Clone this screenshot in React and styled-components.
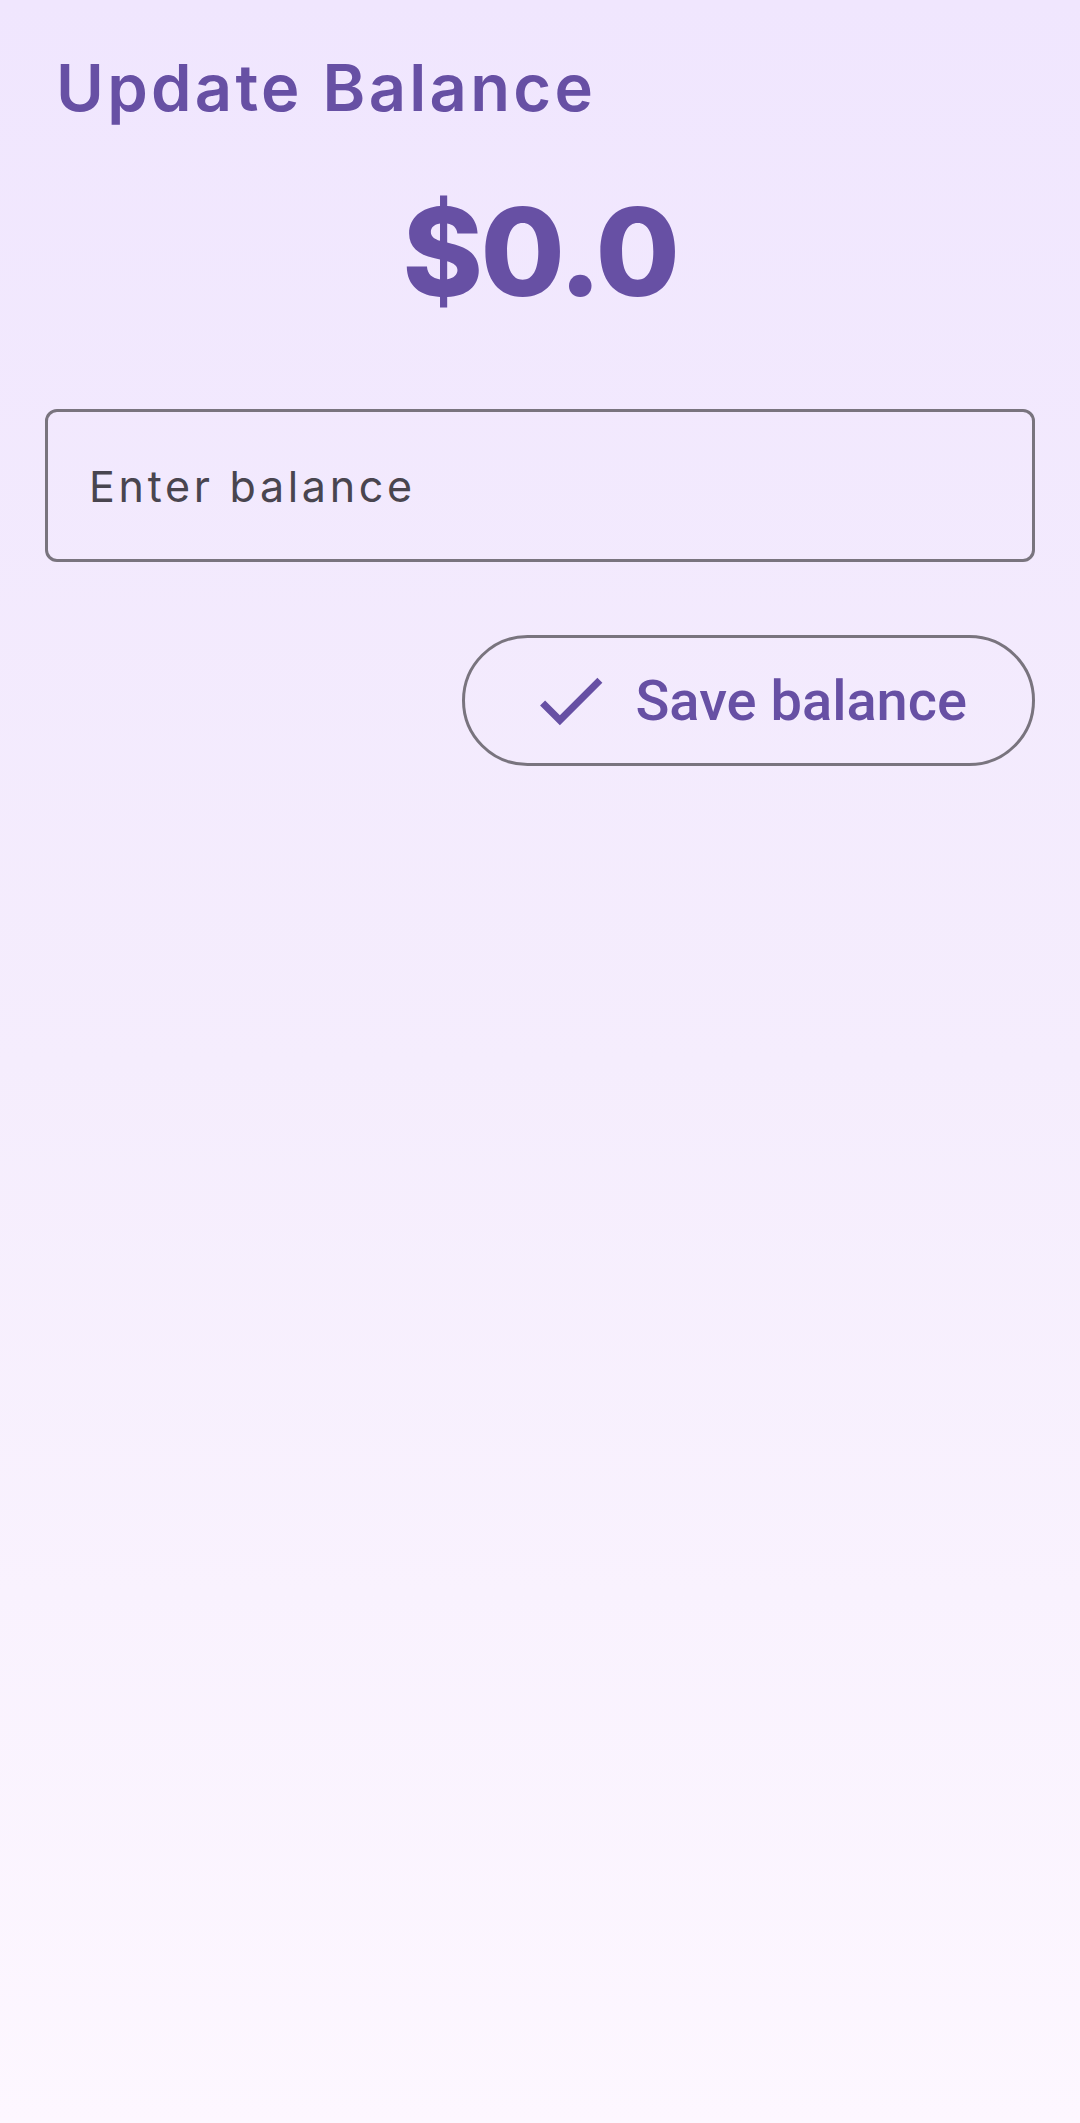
import React from "react";
import styled, { createGlobalStyle } from "styled-components";

const Global = createGlobalStyle`
  html, body {
    margin: 0;
    padding: 0;
  }
  body {
    min-height: 2123px;
    background: linear-gradient(180deg, #f0e6fe 0%, #f5edfd 50%, #fdf7ff 100%);
    font-family: Inter, "Open Sans", sans-serif;
  }
`;

const Page = styled.main`
  min-height: 2123px;
  box-sizing: border-box;
  padding: 55px 45px 0 45px;
  display: flex;
  flex-direction: column;
`;

const Title = styled.h1`
  margin: 0 0 0 11px;
  font-family: Inter, "Open Sans", sans-serif;
  font-weight: 600;
  font-size: 65px;
  line-height: 65px;
  letter-spacing: 3.3px;
  color: #6750a4;
`;

const Amount = styled.div`
  margin-top: 71px;
  align-self: center;
  font-family: Inter, "Open Sans", sans-serif;
  font-weight: 800;
  font-size: 122px;
  line-height: 122px;
  letter-spacing: -2.5px;
  color: #6750a4;
`;

const Field = styled.label`
  margin-top: 96px;
  height: 153px;
  box-sizing: border-box;
  border: 3px solid #79747e;
  border-radius: 12px;
  display: flex;
  align-items: center;
  padding: 0 0 0 41px;
`;

const Input = styled.input`
  flex: 1;
  border: none;
  outline: none;
  background: transparent;
  font-family: Inter, "Open Sans", sans-serif;
  font-size: 43px;
  letter-spacing: 3.7px;
  color: #1d1b20;
  padding: 0;
  &::placeholder {
    color: #49454f;
    opacity: 1;
  }
`;

const Actions = styled.div`
  margin-top: 73px;
  display: flex;
  justify-content: flex-end;
`;

const OutlinedButton = styled.button`
  height: 131px;
  box-sizing: border-box;
  border: 3px solid #79747e;
  border-radius: 66px;
  background: transparent;
  display: flex;
  align-items: center;
  gap: 22px;
  padding: 0 65px 0 63px;
  color: #6750a4;
  font-family: Roboto, "Liberation Sans", sans-serif;
  font-weight: 500;
  font-size: 56px;
  cursor: pointer;
`;

const Icon = styled.svg`
  width: 85px;
  height: 85px;
  flex: none;
  fill: currentColor;
`;

export default function App() {
  return (
    <>
      <Global />
      <Page>
        <Title>Update Balance</Title>
        <Amount>$0.0</Amount>
        <Field>
          <Input placeholder="Enter balance" />
        </Field>
        <Actions>
          <OutlinedButton type="button">
            <Icon viewBox="0 0 24 24" aria-hidden="true">
              <path d="M9 16.17L4.83 12l-1.42 1.41L9 19 21 7l-1.41-1.41z" />
            </Icon>
            Save balance
          </OutlinedButton>
        </Actions>
      </Page>
    </>
  );
}
